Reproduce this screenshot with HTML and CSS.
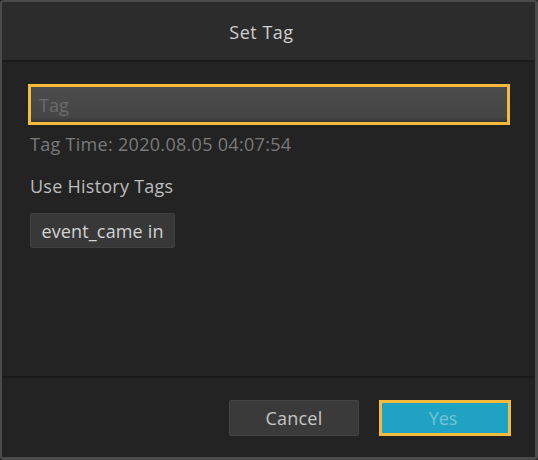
FILE: index.html
```html
<!DOCTYPE html>
<html>
<head>
<meta charset="utf-8">
<link rel="stylesheet" href="styles.css">
</head>
<body>
<div class="dialog">
  <div class="header">Set Tag</div>
  <div class="content">
    <div class="input">Tag</div>
    <div class="time">Tag Time: 2020.08.05 04:07:54</div>
    <div class="label">Use History Tags</div>
    <div class="chips"><span class="chip">event_came in</span></div>
  </div>
  <div class="footer">
    <div class="btn cancel">Cancel</div>
    <div class="btn yes">Yes</div>
  </div>
</div>
</body>
</html>
```
FILE: styles.css
```css
* { box-sizing: border-box; }
html, body { margin: 0; padding: 0; background: #232323; }
body { font-family: "Open Sans", Roboto, sans-serif; }
.dialog {
  width: 538px;
  height: 460px;
  border: 2px solid #4b4b4b;
  border-right-width: 3px;
  border-bottom-width: 3px;
  border-radius: 4px;
  display: flex;
  flex-direction: column;
  background: #232323;
}
.header {
  height: 60px;
  flex: none;
  background: #2b2c2b;
  border-bottom: 2px solid #1a1a1a;
  color: #cfcfcf;
  font-size: 18px;
  letter-spacing: 0.5px;
  display: flex;
  align-items: center;
  justify-content: center;
  padding: 1px 14px 0 0;
}
.content {
  flex: 1;
  padding: 22px 25px 0 26px;
  background: #232323;
}
.input {
  height: 41px;
  border: 3px solid #f5bb3c;
  background: linear-gradient(#4a4b4a, #454645 85%, #353635);
  color: #6c6c6c;
  font-size: 18px;
  display: flex;
  align-items: center;
  padding-left: 8px;
}
.time {
  margin-top: 9px;
  padding-left: 2px;
  color: #7a7a7a;
  font-size: 18px;
  letter-spacing: 0.3px;
  line-height: 20px;
}
.label {
  margin-top: 22px;
  padding-left: 2px;
  color: #bdbdbd;
  font-size: 18px;
  letter-spacing: 0.25px;
  line-height: 20px;
}
.chips { margin-top: 17px; padding-left: 2px; display: flex; }
.chip {
  height: 35px;
  width: 145px;
  background: #383838;
  border: 1px solid #404040;
  border-radius: 2px;
  color: #d2d2d2;
  font-size: 18px;
  letter-spacing: 0.15px;
  display: flex;
  align-items: center;
  justify-content: center;
}
.footer {
  flex: none;
  border-top: 2px solid #1a1a1a;
  padding: 22px 24px 21px 0;
  display: flex;
  justify-content: flex-end;
  gap: 20px;
  background: #232323;
}
.btn {
  height: 36px;
  display: flex;
  align-items: center;
  justify-content: center;
  font-size: 18px;
}
.cancel {
  width: 130px;
  background: #3a3a3a;
  border: 1px solid #444;
  border-radius: 2px;
  color: #c6c6c6;
  letter-spacing: 0.2px;
}
.yes {
  width: 132px;
  background: #20a3c2;
  border: 3px solid #f5bb3c;
  color: #74c3d6;
  padding-right: 4px;
}
```
